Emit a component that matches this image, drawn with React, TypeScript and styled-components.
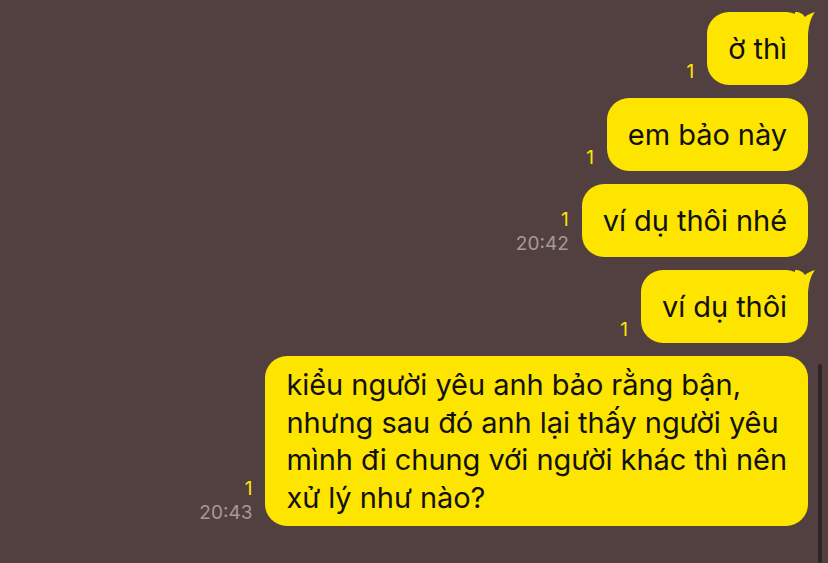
import React from 'react'
import styled, { createGlobalStyle } from 'styled-components'

const GlobalStyle = createGlobalStyle`
  html, body {
    margin: 0;
    padding: 0;
    background: #524040;
  }
  body {
    font-family: Inter, "Noto Sans", "DejaVu Sans", sans-serif;
  }
`

const Chat = styled.main`
  position: relative;
  width: 828px;
  height: 563px;
  overflow: hidden;
  box-sizing: border-box;
  padding: 12px 20px 0 0;
  display: flex;
  flex-direction: column;
  align-items: flex-end;
  gap: 13px;
`

const Row = styled.div`
  display: flex;
  align-items: flex-end;
  gap: 13px;
`

const Meta = styled.div`
  display: flex;
  flex-direction: column;
  align-items: flex-end;
  padding-bottom: 1px;
  font-size: 19px;
  line-height: 24px;
`

const Unread = styled.span`
  color: #fee500;
`

const Time = styled.span`
  color: #a39a99;
`

const Bubble = styled.div`
  position: relative;
  box-sizing: border-box;
  min-height: 73px;
  display: flex;
  align-items: center;
  padding: 10px 21px;
  border-radius: 22px;
  background: #fee500;
  color: #111;
  font-size: 29px;
  line-height: 37.5px;
  letter-spacing: -0.05px;
`

const Tail = styled.svg`
  position: absolute;
  top: 0;
  right: -7px;
  width: 20px;
  height: 30px;
`

const Scrollbar = styled.div`
  position: absolute;
  top: 364px;
  right: 6px;
  bottom: 0;
  width: 4px;
  border-radius: 2px;
  background: #2e2424;
`

interface Message {
  text: React.ReactNode
  time?: string
  tail?: boolean
}

const messages: Message[] = [
  { text: 'ờ thì', tail: true },
  { text: 'em bảo này' },
  { text: 'ví dụ thôi nhé', time: '20:42' },
  { text: 'ví dụ thôi', tail: true },
  {
    text: (
      <>
        kiểu người yêu anh bảo rằng bận,
        <br />
        nhưng sau đó anh lại thấy người yêu
        <br />
        mình đi chung với người khác thì nên
        <br />
        xử lý như nào?
      </>
    ),
    time: '20:43',
  },
]

const App: React.FC = () => {
  return (
    <Chat>
      <GlobalStyle />
      {messages.map((message, i) => (
        <Row key={i}>
          <Meta>
            <Unread>1</Unread>
            {message.time && <Time>{message.time}</Time>}
          </Meta>
          <Bubble>
            <span>{message.text}</span>
            {message.tail && (
              <Tail viewBox="0 0 20 30">
                <path
                  d="M0 0 C5 0 8 2 10 5 C12 3 16 1 20 0 C16 5 14 12 13 22 L13 30 L0 30 Z"
                  fill="#fee500"
                />
              </Tail>
            )}
          </Bubble>
        </Row>
      ))}
      <Scrollbar />
    </Chat>
  )
}

export default App
